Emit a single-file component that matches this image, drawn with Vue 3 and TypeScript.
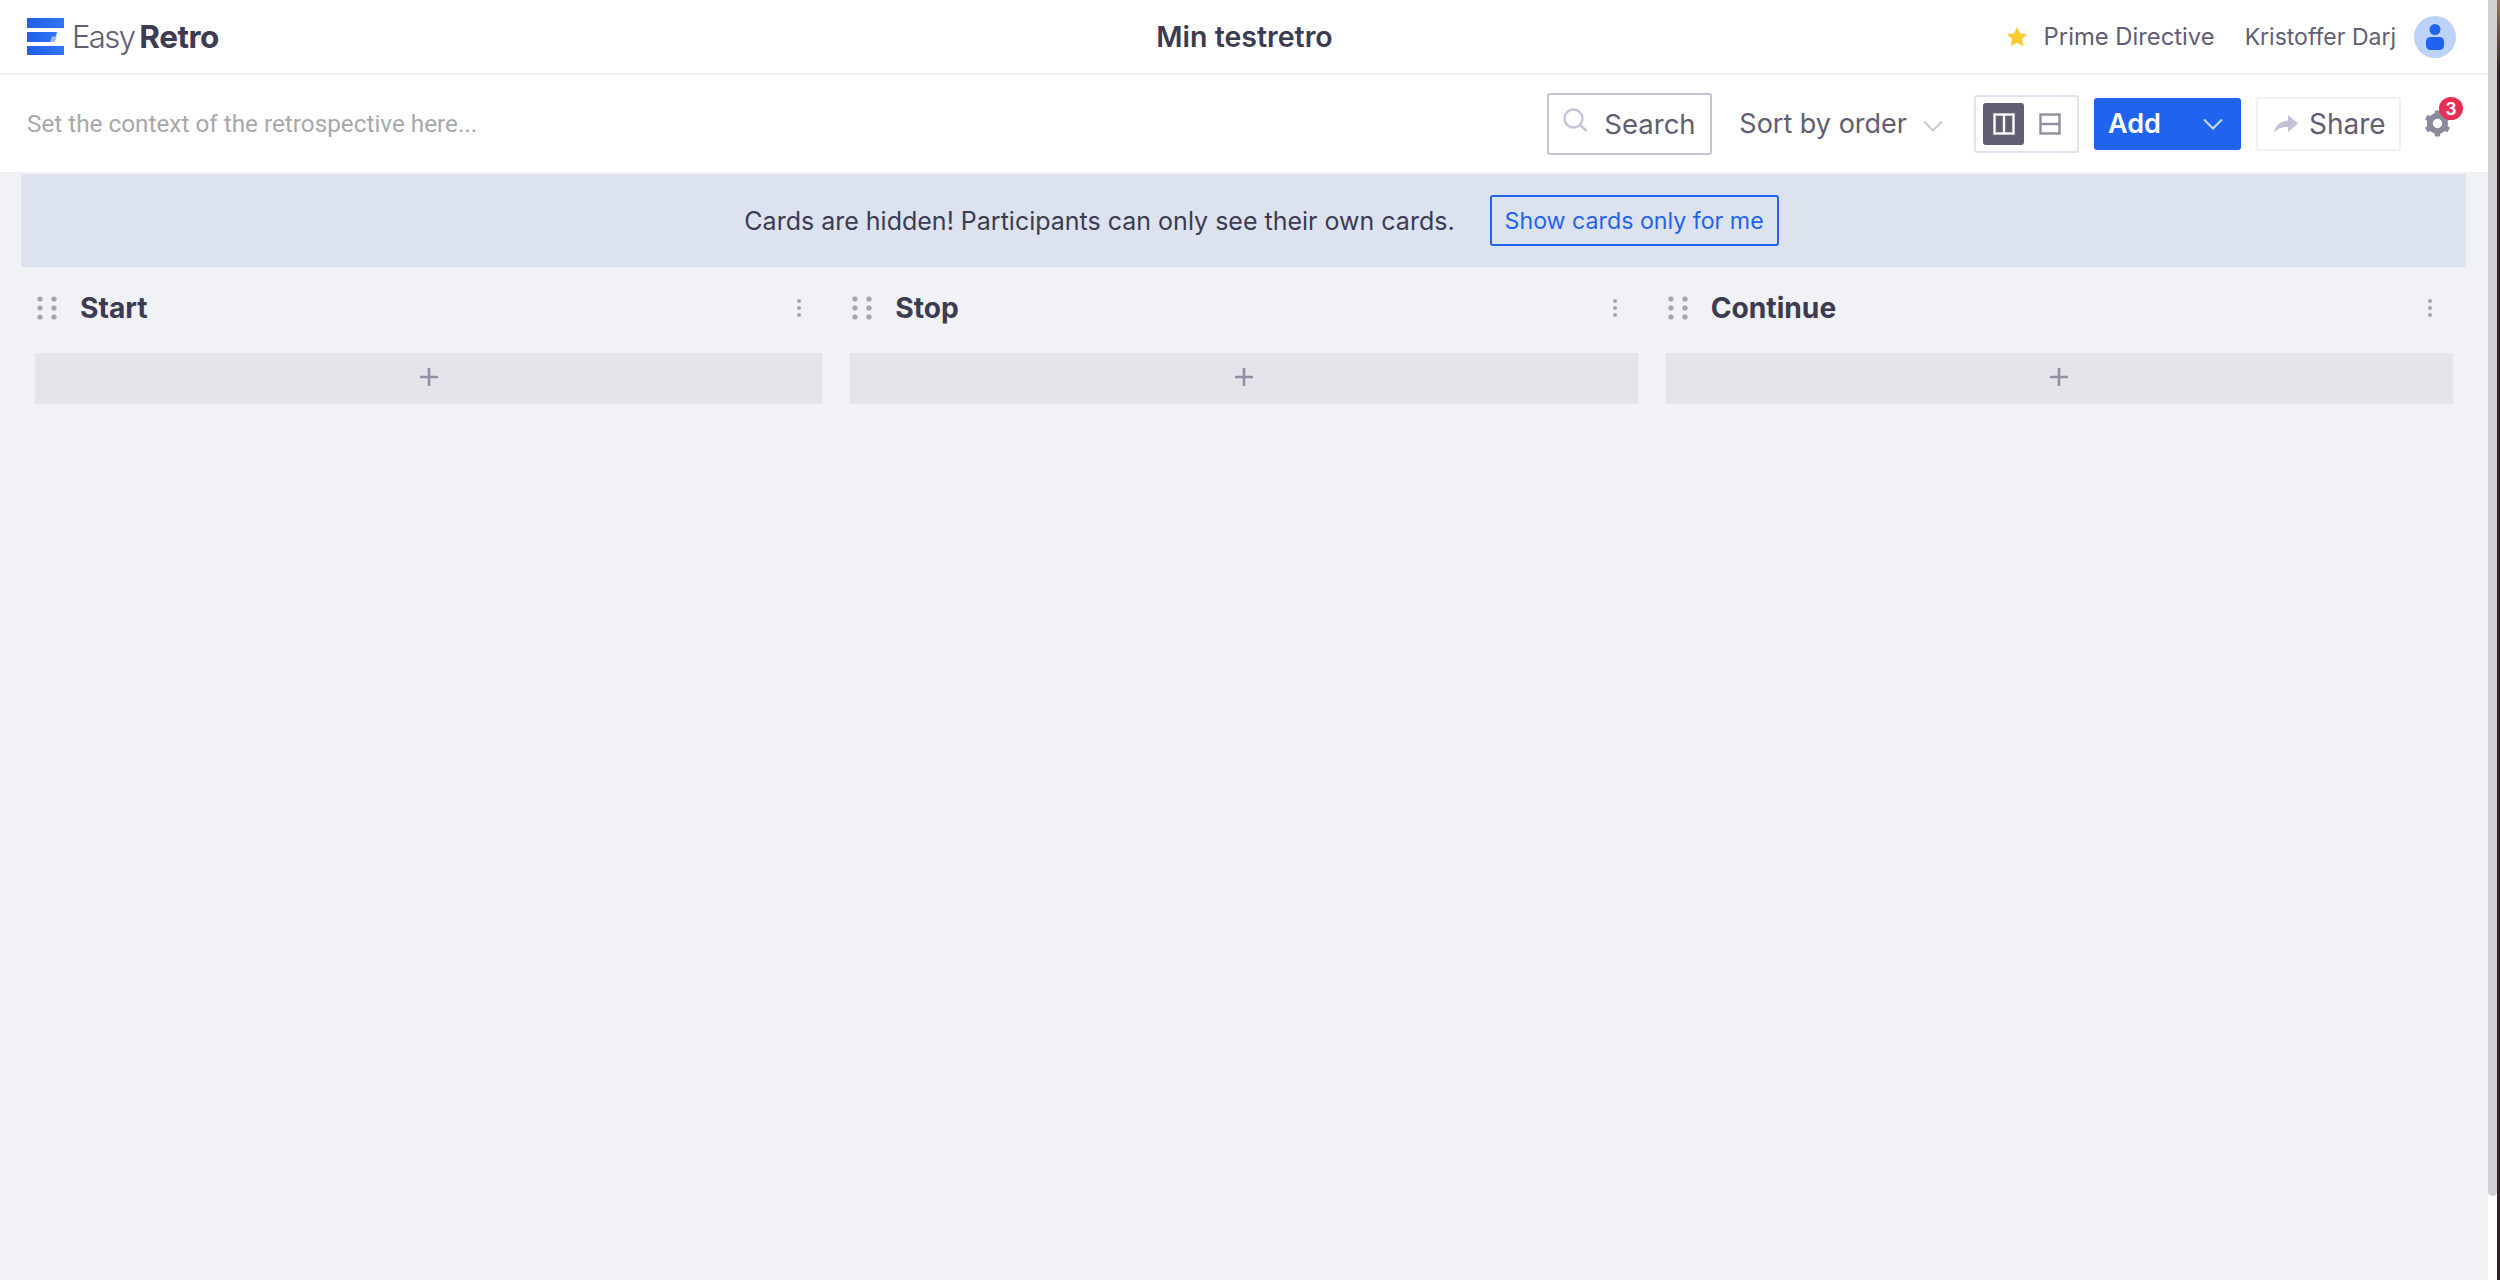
<script setup lang="ts">
const columns: string[] = ['Start', 'Stop', 'Continue']
</script>

<template>
  <div class="page">
    <div class="main">
      <header class="topbar">
        <div class="logo">
          <svg class="logo-mark" width="37" height="37" viewBox="0 0 37 37">
            <defs>
              <linearGradient id="lg" x1="0" x2="1" y1="0" y2="0">
                <stop offset="0" stop-color="#1f5fe8" />
                <stop offset="1" stop-color="#3275f5" />
              </linearGradient>
            </defs>
            <rect x="0" y="0" width="37" height="10" fill="url(#lg)" />
            <path d="M0 14H30L27.5 24H0Z" fill="url(#lg)" />
            <path d="M23 24L25 18.500H30L27.5 24Z" fill="#9dbcf6" />
            <rect x="0" y="28" width="37" height="9" fill="url(#lg)" />
          </svg>
          <span class="logo-easy">Easy</span><span class="logo-retro">Retro</span>
        </div>
        <div class="board-title">Min testretro</div>
        <div class="top-right">
          <svg class="star" width="22" height="22" viewBox="0 0 24 24"><path d="M12 1l3.300 7.100 7.700.9-5.700 5.200 1.600 7.800L12 18.200 5.100 22l1.600-7.800L1 9l7.700-.9z" fill="#fbcb2f" /></svg>
          <span class="prime">Prime Directive</span>
          <span class="user">Kristoffer Darj</span>
          <span class="avatar">
            <svg width="18" height="26" viewBox="0 0 18 26"><circle cx="9" cy="5.500" r="5.500" fill="#1f63ee" /><rect x="0" y="13" width="18" height="13" rx="4.500" fill="#1f63ee" /></svg>
          </span>
        </div>
      </header>

      <div class="toolbar">
        <div class="context">Set the context of the retrospective here...</div>
        <div class="tools">
          <div class="search">
            <svg width="25" height="25" viewBox="0 0 25 25" fill="none" stroke="#c4c3d8" stroke-width="2.400"><circle cx="10.500" cy="10.500" r="9" /><path d="M17 17l6.500 6" /></svg>
            <span>Search</span>
          </div>
          <div class="sort">
            <span>Sort by order</span>
            <svg width="20" height="12" viewBox="0 0 20 12" fill="none" stroke="#c4c3d8" stroke-width="1.800"><path d="M1 1.500l9 9 9-9" /></svg>
          </div>
          <div class="view-toggle">
            <span class="view active">
              <svg width="22" height="22" viewBox="0 0 22 22" fill="none" stroke="#fff" stroke-width="2.400"><rect x="1.500" y="1.500" width="19" height="19" /><path d="M11 1.500v19" /></svg>
            </span>
            <span class="view">
              <svg width="22" height="22" viewBox="0 0 22 22" fill="none" stroke="#8f8ea3" stroke-width="2.400"><rect x="1.500" y="1.500" width="19" height="19" /><path d="M1.500 11h19" /></svg>
            </span>
          </div>
          <div class="add">
            <span>Add</span>
            <svg width="20" height="12" viewBox="0 0 20 12" fill="none" stroke="#c9d9fb" stroke-width="2"><path d="M1 1.500l9 9 9-9" /></svg>
          </div>
          <div class="share">
            <svg width="24" height="18" viewBox="0 0 24 18"><path d="M14 0l10 8.500-10 8.500v-5C8 12 3.500 13.500 0 18c1-7 5.500-11.500 14-12.500z" fill="#c2c1d6" /></svg>
            <span>Share</span>
          </div>
          <div class="settings">
            <svg width="27" height="27" viewBox="0 0 24 24">
              <circle cx="12" cy="12" r="6.800" fill="none" stroke="#8a8a9c" stroke-width="5.200" />
              <g fill="#8a8a9c">
                <rect x="9.500" y="0.500" width="5" height="5" rx="1" />
                <rect x="9.500" y="18.500" width="5" height="5" rx="1" />
                <rect x="9.500" y="0.500" width="5" height="5" rx="1" transform="rotate(60 12 12)" />
                <rect x="9.500" y="18.500" width="5" height="5" rx="1" transform="rotate(60 12 12)" />
                <rect x="9.500" y="0.500" width="5" height="5" rx="1" transform="rotate(120 12 12)" />
                <rect x="9.500" y="18.500" width="5" height="5" rx="1" transform="rotate(120 12 12)" />
              </g>
            </svg>
            <span class="badge">3</span>
          </div>
        </div>
      </div>

      <div class="content">
        <div class="notice">
          <span class="notice-text">Cards are hidden! Participants can only see their own cards.</span>
          <button class="notice-btn">Show cards only for me</button>
        </div>
        <div class="columns">
          <section v-for="c in columns" :key="c" class="column">
            <div class="col-head">
              <svg class="grip" width="20" height="24" viewBox="0 0 20 24" fill="#a5a5ab">
                <circle cx="3" cy="3" r="2.600" /><circle cx="17" cy="3" r="2.600" />
                <circle cx="3" cy="12" r="2.600" /><circle cx="17" cy="12" r="2.600" />
                <circle cx="3" cy="21" r="2.600" /><circle cx="17" cy="21" r="2.600" />
              </svg>
              <h2 class="col-title">{{ c }}</h2>
              <svg class="more" width="6" height="20" viewBox="0 0 6 20" fill="#a5a5ab">
                <circle cx="3" cy="3" r="2" /><circle cx="3" cy="10" r="2" /><circle cx="3" cy="17" r="2" />
              </svg>
            </div>
            <div class="add-card">
              <svg width="18" height="18" viewBox="0 0 18 18" stroke="#8f8ea3" stroke-width="2.600"><path d="M9 0v18M0 9h18" /></svg>
            </div>
          </section>
        </div>
      </div>
    </div>
    <div class="scroll-track"><div class="scroll-thumb"></div></div>
    <div class="edge"></div>
  </div>
</template>

<style>
html, body { margin: 0; padding: 0; background: #fff; overflow: hidden; }
</style>

<style scoped>
.page {
  display: flex;
  width: 2500px;
  height: 1280px;
  font-family: Inter, "Noto Sans", sans-serif;
  color: #5f5e72;
  overflow: hidden;
}
.main { flex: 1; min-width: 0; display: flex; flex-direction: column; }
.topbar {
  height: 73px;
  flex: none;
  display: grid;
  grid-template-columns: 1fr auto 1fr;
  align-items: center;
  padding: 0 32px 0 27px;
  background: #fff;
  border-bottom: 2px solid #f0f0f3;
}
.logo { display: flex; align-items: center; }
.logo-mark { margin-right: 8px; }
.logo-easy { font-size: 31px; font-weight: 300; letter-spacing: -1.600px; color: #5f5e72; margin-right: 5px; }
.logo-retro { font-size: 31.500px; font-weight: 700; letter-spacing: -0.5px; color: #3c3b52; }
.board-title { font-size: 28.500px; font-weight: 600; color: #3c3b52; margin-left: 6px; }
.top-right { display: flex; align-items: center; justify-content: flex-end; font-size: 23px; }
.prime { margin-left: 16px; font-size: 23.800px; }
.user { margin-left: 30px; }
.avatar {
  width: 42px;
  height: 42px;
  border-radius: 50%;
  background: #bdd2f8;
  margin-left: 18px;
  display: flex;
  align-items: center;
  justify-content: center;
}
.toolbar {
  height: 97px;
  flex: none;
  display: flex;
  align-items: center;
  justify-content: space-between;
  padding: 0 37px 0 27px;
  background: #fff;
  border-bottom: 2px solid #f0f0f3;
}
.context { font-family: Roboto, sans-serif; font-size: 24.300px; color: #a8a8ab; }
.tools { display: flex; align-items: center; }
.search {
  width: 165px;
  height: 62px;
  box-sizing: border-box;
  border: 2px solid #c4c3d8;
  border-radius: 3px;
  display: flex;
  align-items: center;
  gap: 16px;
  padding-left: 14px;
  font-size: 27.500px;
  margin-left: 1px;
}
.search svg { margin-top: -6px; }
.sort { display: flex; align-items: center; gap: 16px; margin-left: 27px; font-size: 27px; }
.sort svg { margin-top: 4px; }
.view-toggle {
  margin-left: 31px;
  width: 105px;
  height: 58px;
  box-sizing: border-box;
  border: 2px solid #dfe4f2;
  border-radius: 3px;
  display: flex;
  align-items: center;
  padding-left: 7px;
}
.view { width: 41px; height: 42px; display: flex; align-items: center; justify-content: center; border-radius: 3px; margin-right: 5px; }
.view.active { background: #5f5e72; }
.add {
  margin-left: 15px;
  width: 147px;
  height: 52px;
  box-sizing: border-box;
  background: #1f63ee;
  border-radius: 3px;
  display: flex;
  align-items: center;
  justify-content: space-between;
  padding: 0 18px 0 14px;
  color: #fff;
  font-size: 27px;
  font-weight: 600;
}
.share {
  margin-left: 15px;
  width: 145px;
  height: 54px;
  box-sizing: border-box;
  border: 2px solid #f0f0f3;
  border-radius: 3px;
  display: flex;
  align-items: center;
  gap: 11px;
  padding-left: 16px;
  font-size: 28px;
}
.settings { position: relative; margin-left: 23px; width: 27px; height: 27px; }
.badge {
  position: absolute;
  top: -13px;
  left: 15px;
  width: 24px;
  height: 23px;
  border-radius: 50%;
  background: #e62e55;
  color: #fff;
  font-size: 17px;
  font-weight: 700;
  display: flex;
  align-items: center;
  justify-content: center;
}
.content { flex: 1; background: #f0f2f6; padding: 0 22px 0 21px; }
.notice {
  height: 93px;
  box-sizing: border-box;
  padding-left: 36px;
  background: #dce3ef;
  display: flex;
  align-items: center;
  justify-content: center;
  gap: 35px;
}
.notice-text { font-size: 25px; color: #3c3b52; }
.notice-btn {
  height: 51px;
  width: 289px;
  box-sizing: border-box;
  background: transparent;
  border: 2px solid #1f63ee;
  border-radius: 3px;
  color: #1f63ee;
  font-family: inherit;
  font-size: 23.200px;
  padding: 0;
}
.columns { display: flex; gap: 28px; padding: 0 13px 0 14px; }
.column { flex: 1; min-width: 0; }
.col-head { height: 82px; padding-bottom: 4px; display: flex; align-items: center; padding-left: 2px; padding-right: 20px; }
.grip { flex: none; }
.col-title { margin: 0 0 0 23px; flex: 1; font-size: 28.200px; font-weight: 700; color: #3c3b52; }
.add-card {
  height: 51px;
  box-sizing: border-box;
  padding-bottom: 4px;
  background: #e4e5ea;
  display: flex;
  align-items: center;
  justify-content: center;
}
.scroll-track { width: 9px; flex: none; background: #fff; }
.scroll-thumb { height: 1196px; background: #cfcfd4; border-radius: 0 0 5px 5px; }
.edge { width: 3px; flex: none; background: linear-gradient(180deg, #a8703c 0, #6a4a30 40px, #2d2425 70px); }
</style>
